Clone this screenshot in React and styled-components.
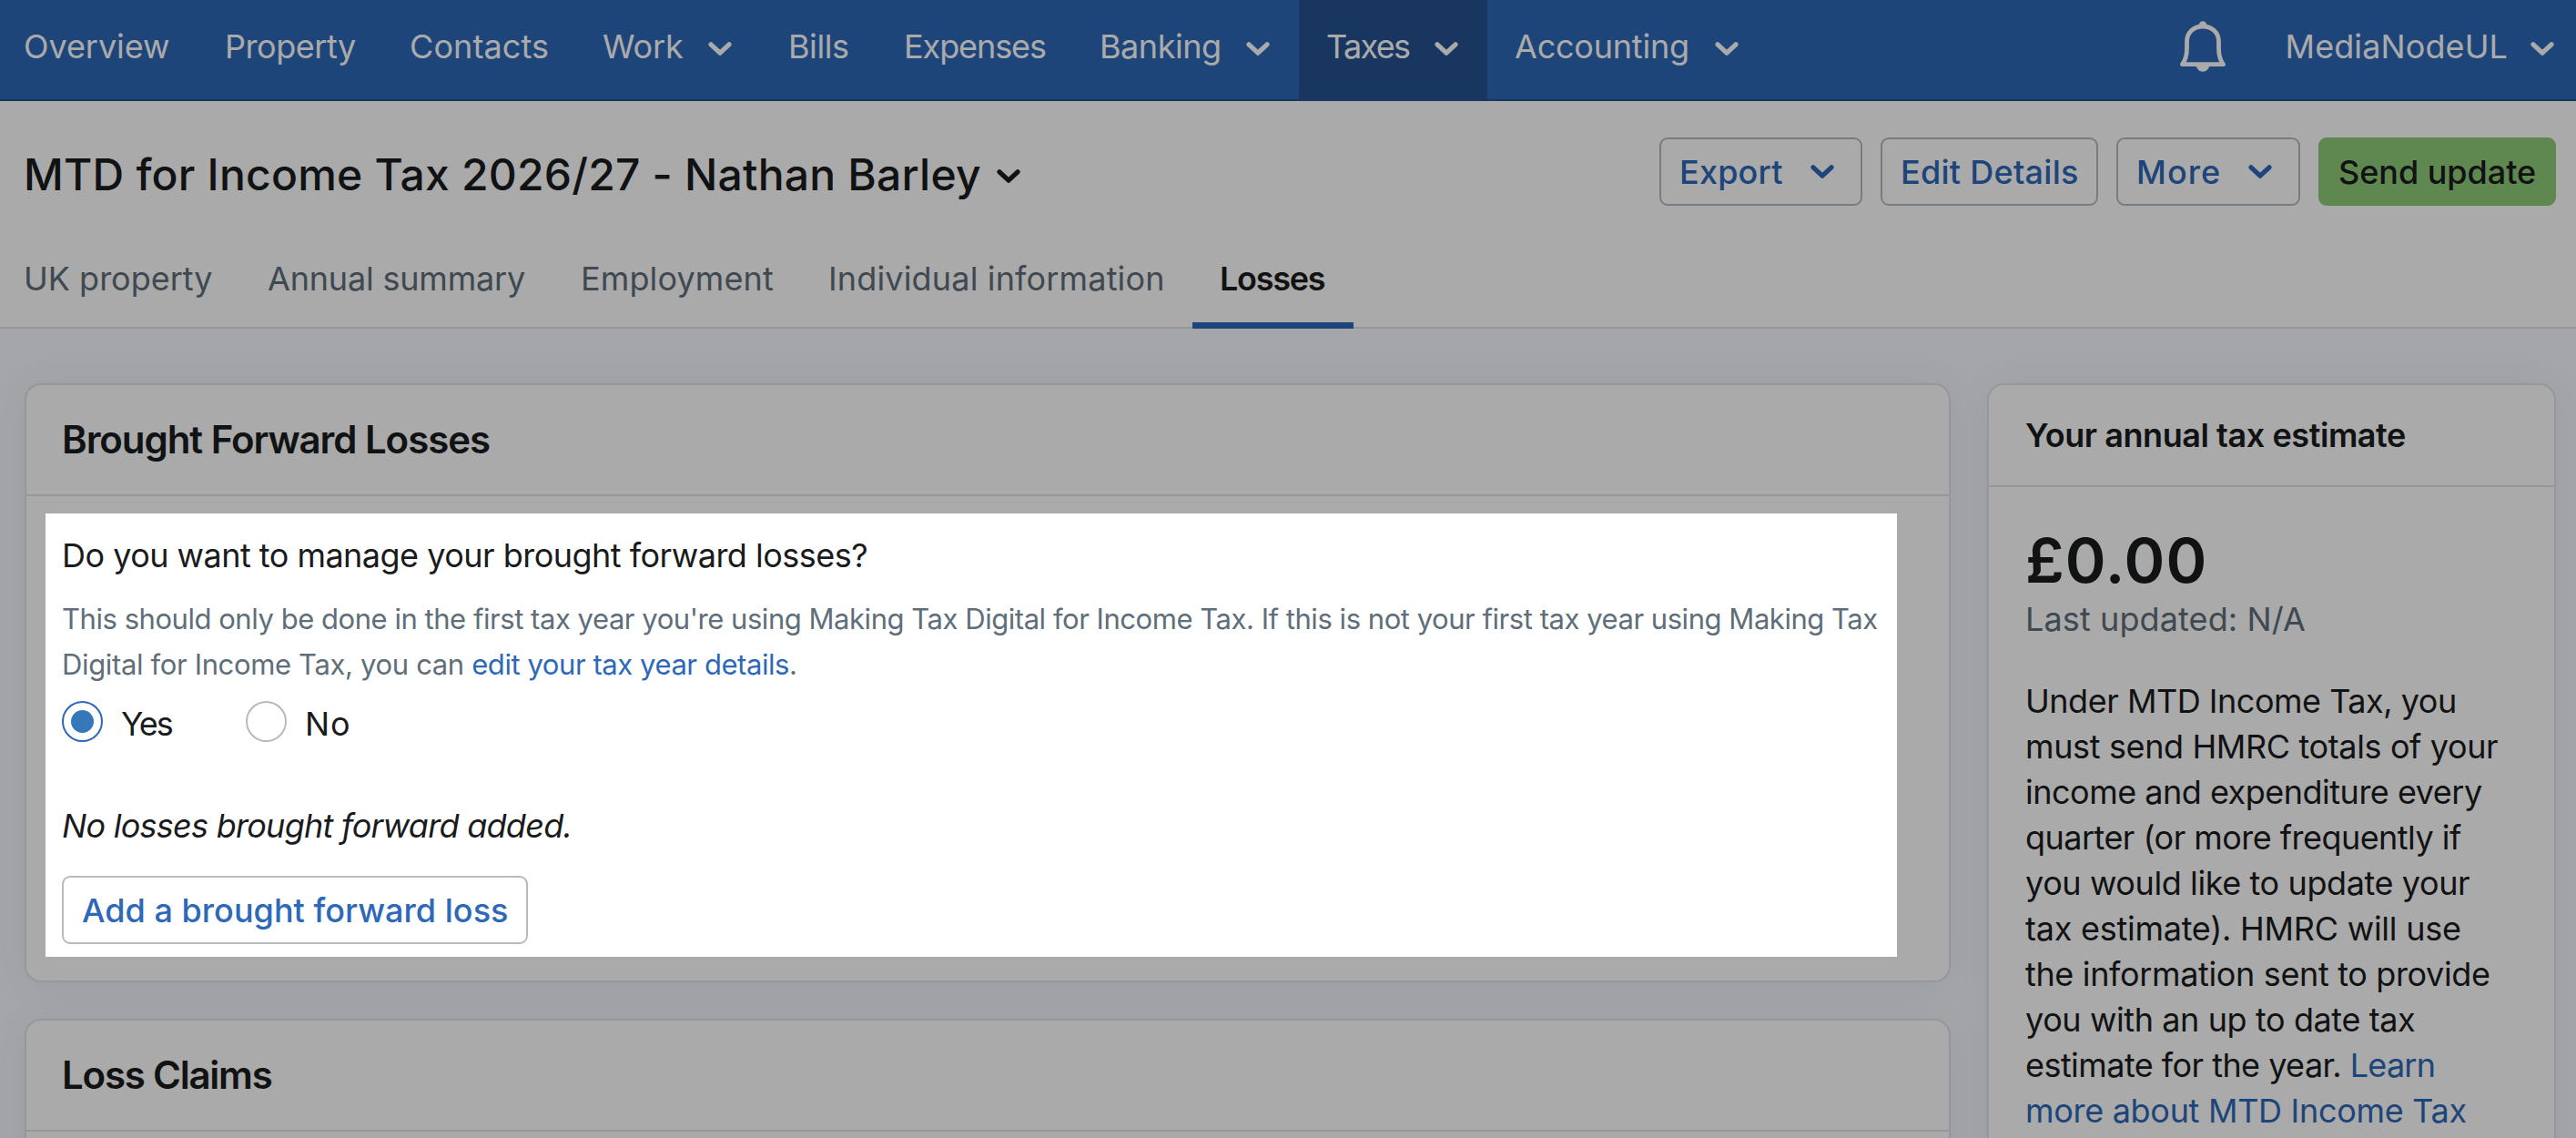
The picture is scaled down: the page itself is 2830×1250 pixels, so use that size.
import React from "react";
import styled, { createGlobalStyle, css } from "styled-components";

const color = {
  blue: "#2e68b8",
  navy: "#245290",
  green: "#8dcc78",
  ink: "#1a1b1d",
  muted: "#606e79",
  line: "#e2e3e9",
  outline: "#b5bbc1",
  page: "#f7f9fe",
};

const GlobalStyle = createGlobalStyle`
  *, *::before, *::after { box-sizing: border-box; }
  body {
    margin: 0;
    background: ${color.page};
    color: ${color.ink};
    font-family: Inter, "Liberation Sans", sans-serif;
    font-size: 36px;
    line-height: 50px;
  }
`;

const Page = styled.div`
  position: relative;
  width: 2830px;
  height: 1250px;
  overflow: hidden;
  background: ${color.page};
`;

const Text = styled.span`
  white-space: nowrap;
  letter-spacing: ${(p) => p.$track || 0}px;
`;

/* Navigation */
const NavBar = styled.nav`
  display: flex;
  justify-content: space-between;
  height: 111px;
  padding-right: 24px;
  background: ${color.blue};
  border-bottom: 2px solid ${color.navy};
  color: #fff;
`;

const NavList = styled.div`
  display: flex;
  margin-left: -4px;
`;

const NavItem = styled.a`
  display: flex;
  align-items: center;
  justify-content: space-between;
  width: ${(p) => p.$width}px;
  height: 109px;
  padding: 0 32px 2px 30px;
  background: ${(p) => (p.$active ? color.navy : "transparent")};
`;

const NavLabel = styled(Text)`
  padding-bottom: 5px;
`;

const Account = styled.div`
  display: flex;
  align-items: center;
  padding-bottom: 2px;
`;

const BellButton = styled.span`
  display: flex;
  padding-bottom: 5px;
`;

const AccountName = styled(NavLabel)`
  margin: 0 25px 0 66px;
`;

/* Page header */
const Header = styled.header`
  height: 250px;
  padding-top: 40px;
  background: #fff;
  border-bottom: 2px solid ${color.line};
`;

const HeaderRow = styled.div`
  display: flex;
  justify-content: space-between;
  height: 103px;
  padding: 0 22px 0 26px;
`;

const Title = styled.h1`
  display: flex;
  align-items: center;
  gap: 17px;
  height: 60px;
  margin: 11px 0 0;
  font-size: 48px;
  font-weight: 500;
  line-height: 60px;

  svg { margin-top: 3px; }
`;

const Actions = styled.div`
  display: flex;
  gap: 20px;
`;

const Button = styled.button`
  display: flex;
  align-items: center;
  justify-content: space-between;
  width: ${(p) => p.$width}px;
  height: 75px;
  padding: 0 29px 0 20px;
  border: 2px solid ${color.outline};
  border-radius: 9px;
  background: #fff;
  color: ${color.blue};
  font: 500 36px/50px Inter, "Liberation Sans", sans-serif;
  ${(p) =>
    p.$primary &&
    css`
      border-color: ${color.green};
      background: ${color.green};
      color: ${color.ink};
    `}
`;

const Tabs = styled.div`
  display: flex;
  height: 107px;
  margin-left: -4px;
`;

const Tab = styled.a`
  width: ${(p) => p.$width}px;
  height: 107px;
  padding-left: 30px;
  line-height: 104px;
  color: ${color.muted};
  ${(p) =>
    p.$active &&
    css`
      border-bottom: 7px solid ${color.blue};
      color: ${color.ink};
      font-weight: 600;
    `}
`;

/* Cards */
const Content = styled.main`
  display: grid;
  grid-template-columns: 2116px 625px;
  gap: 40px;
  padding: 60px 22px 0 27px;
`;

const Column = styled.div`
  display: flex;
  flex-direction: column;
  gap: 40px;
`;

const Card = styled.section`
  min-height: 400px;
  border: 2px solid ${color.line};
  border-radius: 18px;
  background: #fff;
  box-shadow: 0 4px 40px rgba(10, 90, 140, 0.08);
`;

const CardTitle = styled.h2`
  height: 122px;
  margin: 0;
  padding-left: 39px;
  border-bottom: 2px solid ${color.line};
  font-size: 42px;
  font-weight: 600;
  line-height: 120px;
`;

const SideTitle = styled(CardTitle)`
  height: 112px;
  padding-left: 40px;
  font-size: 36px;
  line-height: 110px;
`;

const SideBody = styled.div`
  padding: 40px 39px 40px 40px;
`;

const Amount = styled.div`
  font-size: 68px;
  font-weight: 600;
  line-height: 80px;
`;

const Muted = styled.div`
  color: ${color.muted};
`;

const Paragraph = styled.p`
  display: flex;
  flex-direction: column;
  margin: 40px 0 0;
`;

const Link = styled.a`
  color: ${color.blue};
  letter-spacing: ${(p) => p.$track || 0}px;
`;

/* Highlighted step: the outer shadow dims everything around the panel */
const Spotlight = styled.div`
  position: relative;
  z-index: 10;
  display: flex;
  flex-direction: column;
  align-items: flex-start;
  width: 2034px;
  height: 487px;
  margin: 19px 0 26px 21px;
  padding: 21px 18px 0;
  background: #fff;
  box-shadow: 0 0 0 3000px rgba(0, 0, 0, 0.3333);
`;

const Help = styled.p`
  display: flex;
  flex-direction: column;
  margin: 20px 0 15px;
  color: ${color.muted};
  font-size: 31px;
`;

const Radios = styled.div`
  display: flex;
`;

const Option = styled.label`
  display: flex;
  align-items: center;
  gap: 20px;
  width: 202px;
  height: 45px;
`;

const OptionLabel = styled(Text)`
  padding-top: 5px;
`;

const Radio = styled.span`
  display: grid;
  place-items: center;
  width: 45px;
  height: 45px;
  border: 2px solid ${(p) => (p.$checked ? color.blue : color.outline)};
  border-radius: 50%;

  &::after {
    content: "";
    width: 25px;
    height: 25px;
    border-radius: 50%;
    background: ${(p) => (p.$checked ? "#3578b8" : "transparent")};
  }
`;

const Empty = styled.em`
  margin: 67px 0 30px;
  letter-spacing: -0.73px;
`;

const Chevron = () => (
  <svg width="26" height="15" viewBox="0 0 26 15" fill="none">
    <path d="M3 2.8L13 12.2L23 2.8" stroke="currentColor" strokeWidth="5.2" strokeLinecap="round" strokeLinejoin="round" />
  </svg>
);

const Bell = () => (
  <svg width="50" height="56" viewBox="0 0 50 56" fill="none">
    <path
      d="M2.4 47.7C6.6 42.5 7.5 38 7.5 30V23C7.5 12.5 15 6 25 6S42.5 12.5 42.5 23V30C42.5 38 43.4 42.5 47.6 47.7Z"
      stroke="currentColor"
      strokeWidth="4.8"
      strokeLinejoin="round"
    />
    <path d="M19.5 6.5C21 4.5 21 0.3 25 0.3S29 4.5 30.5 6.5Z" fill="currentColor" />
    <path d="M17.7 49C18.5 53 21.3 55.7 25 55.7S31.5 53 32.3 49Z" fill="currentColor" />
  </svg>
);

const NAV = [
  { label: "Overview", width: 221, track: -0.06 },
  { label: "Property", width: 203, track: -0.45 },
  { label: "Contacts", width: 212, track: 0.1 },
  { label: "Work", width: 204, track: -0.12, menu: true },
  { label: "Bills", width: 127, track: -0.43 },
  { label: "Expenses", width: 215, track: -1.08 },
  { label: "Banking", width: 249, track: -0.46, menu: true },
  { label: "Taxes", width: 207, track: -1.66, menu: true, active: true },
  { label: "Accounting", width: 308, track: -0.21, menu: true },
];

const TABS = [
  { label: "UK property", width: 268, track: 0 },
  { label: "Annual summary", width: 344, track: -0.19 },
  { label: "Employment", width: 272, track: 0.13 },
  { label: "Individual information", width: 430, track: 0.16 },
  { label: "Losses", width: 177, track: -1.25, active: true },
];

const ACTIONS = [
  { label: "Export", width: 223, track: 0.2, menu: true },
  { label: "Edit Details", width: 239, track: 0.27 },
  { label: "More", width: 202, track: 1.06, menu: true },
  { label: "Send update", width: 261, track: -0.04, primary: true },
];

const ESTIMATE_LINES = [
  ["Under MTD Income Tax, you", -0.48],
  ["must send HMRC totals of your", -0.37],
  ["income and expenditure every", -0.5],
  ["quarter (or more frequently if", -0.54],
  ["you would like to update your", -0.4],
  ["tax estimate). HMRC will use", -0.25],
  ["the information sent to provide", -0.35],
  ["you with an up to date tax", -0.4],
];

export default function App() {
  return (
    <Page>
      <GlobalStyle />
      <NavBar>
        <NavList>
          {NAV.map((n) => (
            <NavItem key={n.label} $width={n.width} $active={n.active}>
              <NavLabel $track={n.track}>{n.label}</NavLabel>
              {n.menu && <Chevron />}
            </NavItem>
          ))}
        </NavList>
        <Account>
          <BellButton>
            <Bell />
          </BellButton>
          <AccountName $track={0.1}>MediaNodeUL</AccountName>
          <Chevron />
        </Account>
      </NavBar>

      <Header>
        <HeaderRow>
          <Title>
            <Text $track={0.22}>MTD for Income Tax 2026/27 - Nathan Barley</Text>
            <Chevron />
          </Title>
          <Actions>
            {ACTIONS.map((a) => (
              <Button key={a.label} $width={a.width} $primary={a.primary}>
                <Text $track={a.track}>{a.label}</Text>
                {a.menu && <Chevron />}
              </Button>
            ))}
          </Actions>
        </HeaderRow>
        <Tabs>
          {TABS.map((t) => (
            <Tab key={t.label} $width={t.width} $active={t.active}>
              <Text $track={t.track}>{t.label}</Text>
            </Tab>
          ))}
        </Tabs>
      </Header>

      <Content>
        <Column>
          <Card>
            <CardTitle>
              <Text $track={-1.06}>Brought Forward Losses</Text>
            </CardTitle>
            <Spotlight>
              <Text $track={-0.52}>Do you want to manage your brought forward losses?</Text>
              <Help>
                <Text $track={-0.46}>
                  This should only be done in the first tax year you're using Making Tax Digital for Income Tax. If this
                  is not your first tax year using Making Tax
                </Text>
                <Text $track={-0.35}>
                  Digital for Income Tax, you can <Link $track={-0.43}>edit your tax year details</Link>.
                </Text>
              </Help>
              <Radios>
                <Option>
                  <Radio $checked />
                  <OptionLabel $track={-2}>Yes</OptionLabel>
                </Option>
                <Option>
                  <Radio />
                  <OptionLabel $track={0.9}>No</OptionLabel>
                </Option>
              </Radios>
              <Empty>No losses brought forward added.</Empty>
              <Button $width={512}>
                <Text $track={0.03}>Add a brought forward loss</Text>
              </Button>
            </Spotlight>
          </Card>
          <Card>
            <CardTitle>
              <Text $track={-1.22}>Loss Claims</Text>
            </CardTitle>
          </Card>
        </Column>

        <Card>
          <SideTitle>
            <Text $track={-0.44}>Your annual tax estimate</Text>
          </SideTitle>
          <SideBody>
            <Amount>
              <Text $track={1}>£0.00</Text>
            </Amount>
            <Muted>
              <Text $track={0.11}>Last updated: N/A</Text>
            </Muted>
            <Paragraph>
              {ESTIMATE_LINES.map(([line, track]) => (
                <Text key={line} $track={track}>
                  {line}
                </Text>
              ))}
              <Text $track={-0.55}>
                estimate for the year. <Link $track={-0.76}>Learn</Link>
              </Text>
              <Link $track={-0.3}>more about MTD Income Tax</Link>
            </Paragraph>
          </SideBody>
        </Card>
      </Content>
    </Page>
  );
}
